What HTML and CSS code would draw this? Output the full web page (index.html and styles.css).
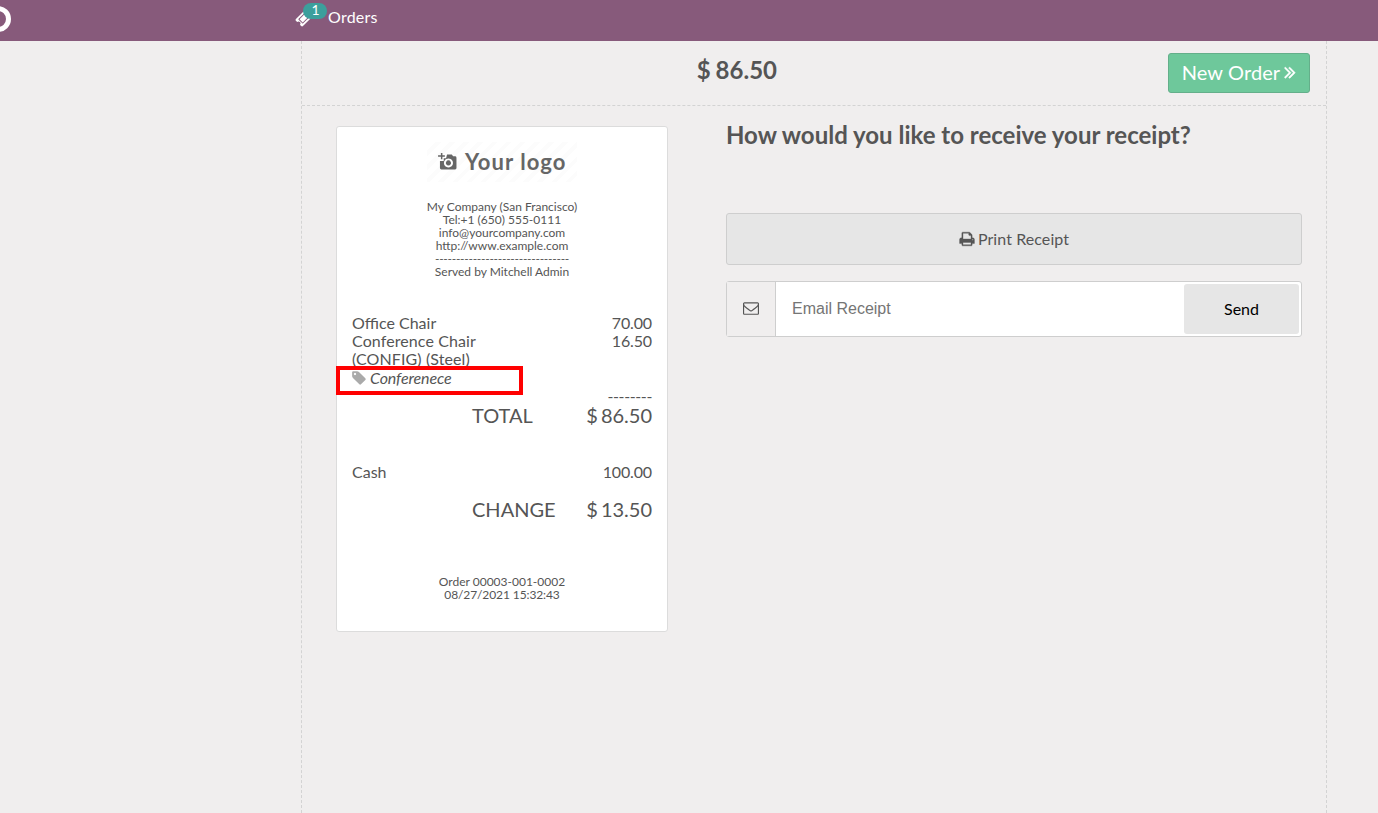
FILE: index.html
```html
<!DOCTYPE html>
<html lang="en">
<head>
<meta charset="utf-8">
<title>Receipt</title>
<link rel="stylesheet" href="styles.css">
</head>
<body>
<div class="pos">
  <header class="topbar">
    <div class="brand"><svg class="brand-mark" viewBox="0 0 12 28"><circle cx="-2" cy="14" r="10.5" fill="none" stroke="#fff" stroke-width="5"/></svg></div>
    <div class="orders">
      <span class="ticket">
        <svg class="ticket-icon" viewBox="0 0 1792 1792"><path d="M1024 452l316 316-572 572-316-316zm-211 979l618-618q19-19 19-45t-19-45l-362-362q-18-18-45-18t-45 18l-618 618q-19 19-19 45t19 45l362 362q18 18 45 18t45-18zm889-637l-907 908q-37 37-90.500 37t-90.500-37l-126-126q56-56 56-136t-56-136-136-56-136 56l-125-126q-37-37-37-90.500t37-90.500l907-906q37-37 90.500-37t90.500 37l125 125q-56 56-56 136t56 136 136 56 136-56l126 125q37 37 37 90.500t-37 90.500z"/></svg>
        <span class="badge">1</span>
      </span>
      <span class="orders-label">Orders</span>
    </div>
  </header>
  <main class="screen">
    <div class="screen-head">
      <h1 class="amount">$ 86.50</h1>
      <button class="next"><span>New Order</span><svg class="next-icon" viewBox="0 0 1024 1792"><path d="M595 960q0 13-10 23l-466 466q-10 10-23 10t-23-10l-50-50q-10-10-10-23t10-23l393-393-393-393q-10-10-10-23t10-23l50-50q10-10 23-10t23 10l466 466q10 10 10 23zm384 0q0 13-10 23l-466 466q-10 10-23 10t-23-10l-50-50q-10-10-10-23t10-23l393-393-393-393q-10-10-10-23t10-23l50-50q10-10 23-10t23 10l466 466q10 10 10 23z"/></svg></button>
    </div>
    <div class="content">
      <section class="receipt">
        <div class="logo">
          <svg class="camera" viewBox="0 0 20 18"><path fill-rule="evenodd" d="M3 0h1.600v2.500h2.600v1.600h-2.600v2.600h-1.600v-2.600h-3v-1.600h3zM9.500 1.500h5l1.500 2h2q1.500 0 1.500 1.500v11q0 1.500-1.500 1.500h-14.500q-1.500 0-1.500-1.500v-7.500h4v-3h2.500zM11 5.700a4.800 4.800 0 1 0 .01 0zM11 7.800a2.700 2.700 0 1 1-.01 0z"/></svg>
          <span class="logo-text">Your logo</span>
        </div>
        <div class="contact">
          <div>My Company (San Francisco)</div>
          <div>Tel:+1 (650) 555-0111</div>
          <div>info@yourcompany.com</div>
          <div>http://www.example.com</div>
          <div class="dashes">--------------------------------</div>
          <div>Served by Mitchell Admin</div>
        </div>
        <div class="lines">
          <div class="row"><span>Office Chair</span><span class="price">70.00</span></div>
          <div class="row"><span class="product">Conference Chair (CONFIG) (Steel)</span><span class="price">16.50</span></div>
          <div class="note">
            <svg class="tag-icon" viewBox="0 0 1792 1792"><path d="M576 448q0-53-37.500-90.500t-90.500-37.500-90.500 37.500-37.500 90.500 37.500 90.500 90.500 37.500 90.500-37.500 37.500-90.500zm1067 576q0 53-37 90l-491 492q-39 37-91 37-53 0-90-37l-715-716q-38-37-64.500-101t-26.500-117v-416q0-52 38-90t90-38h416q53 0 117 26.500t102 64.500l715 714q37 39 37 91z"/></svg>
            <em>Conferenece</em>
            <span class="highlight"></span>
          </div>
        </div>
        <div class="rule">--------</div>
        <div class="row big"><span>TOTAL</span><span>$ 86.50</span></div>
        <div class="row payment"><span>Cash</span><span class="price">100.00</span></div>
        <div class="row big"><span>CHANGE</span><span>$ 13.50</span></div>
        <div class="order-data">
          <div>Order 00003-001-0002</div>
          <div class="date">08/27/2021 15:32:43</div>
        </div>
      </section>
      <section class="actions">
        <h2 class="question">How would you like to receive your receipt?</h2>
        <button class="print"><svg class="print-icon" viewBox="0 0 1792 1792"><path d="M448 1536h896v-256h-896v256zm0-640h896v-384h-160q-40 0-68-28t-28-68v-160h-640v640zm1152 64q0-26-19-45t-45-19-45 19-19 45 19 45 45 19 45-19 19-45zm128 0v416q0 13-9.500 22.500t-22.500 9.500h-224v160q0 40-28 68t-68 28h-960q-40 0-68-28t-28-68v-160h-224q-13 0-22.500-9.500t-9.500-22.500v-416q0-79 56.500-135.500t135.500-56.500h64v-544q0-40 28-68t68-28h672q40 0 88 20t76 48l152 152q28 28 48 76t20 88v256h64q79 0 135.500 56.500t56.500 135.500z"/></svg><span>Print Receipt</span></button>
        <form class="email">
          <span class="email-icon"><svg viewBox="0 0 1792 1792"><path d="M1664 1504v-768q-32 36-69 66-268 206-426 338-51 43-83 67t-86.500 48.500-102.500 24.500h-2q-48 0-102.500-24.500t-86.500-48.500-83-67q-158-132-426-338-37-30-69-66v768q0 13 9.500 22.500t22.500 9.500h1472q13 0 22.500-9.500t9.500-22.500zm0-1051v-24.500l-.5-13-3-12.500-5.500-9-9-7.500-14-2.500h-1472q-13 0-22.500 9.500t-9.500 22.500q0 168 147 284 193 152 401 317 6 5 35 29.500t46 37.500 44.500 31.500 50.500 27.500 43 9h2q20 0 43-9t50.500-27.500 44.500-31.500 46-37.500 35-29.500q208-165 401-317 54-43 100.500-115.500t46.500-131.500zm128-37v1088q0 66-47 113t-113 47h-1472q-66 0-113-47t-47-113v-1088q0-66 47-113t113-47h1472q66 0 113 47t47 113z"/></svg></span>
          <input class="email-input" type="email" placeholder="Email Receipt">
          <button class="send" type="button">Send</button>
        </form>
      </section>
    </div>
  </main>
</div>
</body>
</html>
```
FILE: styles.css
```css
* { box-sizing: border-box; }
body {
  margin: 0;
  background: #f0eeee;
  color: #555;
  font: 16px/18px Lato, "Liberation Sans", sans-serif;
}
svg { display: block; fill: currentColor; flex: none; }
h1, h2 { margin: 0; }
button { font: inherit; color: inherit; }

.pos { display: flex; flex-direction: column; height: 813px; overflow: hidden; }

.topbar { display: flex; height: 41px; flex: none; background: #875a7b; color: #fff; }
.brand { width: 296px; padding-top: 5px; }
.brand-mark { width: 12px; height: 28px; }
.orders { display: flex; padding-top: 8px; }
.ticket { position: relative; width: 32px; }
.ticket-icon { width: 18px; height: 18px; margin: 1px 0 0 -1px; }
.badge {
  position: absolute;
  left: 7px;
  top: -5px;
  width: 24px;
  height: 16px;
  padding-left: 1px;
  border-radius: 8px;
  background: #3c9f9c;
  font-size: 14px;
  line-height: 14px;
  text-align: center;
}
.orders-label { line-height: 17px; letter-spacing: 0.25px; }

.screen {
  flex: 1;
  width: 1026px;
  margin-left: 301px;
  border: 1px dashed #d3d3d3;
  border-width: 0 1px;
}
.screen-head {
  display: flex;
  justify-content: flex-end;
  align-items: flex-start;
  gap: 391px;
  height: 65px;
  padding: 12px 16px 0 0;
  border-bottom: 1px dashed #d3d3d3;
}
.amount {
  font-size: 24px;
  line-height: 34px;
  font-weight: 700;
  white-space: nowrap;
  word-spacing: -1px;
}
.next {
  display: flex;
  align-items: center;
  justify-content: center;
  gap: 4px;
  width: 142px;
  height: 40px;
  padding: 0 0 2px;
  border: 1px solid #64af8a;
  border-radius: 3px;
  background: #6ec89b;
  color: #fff;
  font-size: 20px;
  letter-spacing: 0.1px;
  white-space: nowrap;
}
.next-icon { width: 12px; height: 20px; stroke: currentColor; stroke-width: 40px; }

.content { display: flex; gap: 58px; padding: 20px 24px 0 34px; align-items: flex-start; }
.receipt {
  width: 332px;
  height: 506px;
  padding: 15px;
  border: 1px solid #dcdcdc;
  border-radius: 3px;
  background: #fff;
}
.logo {
  display: flex;
  align-items: center;
  gap: 8px;
  width: 150px;
  height: 40px;
  margin: 0 auto 18px;
  padding: 0 0 1px 11px;
  background: repeating-linear-gradient(135deg, #fff 0 6px, #fcfcfc 6px 10px);
  color: #666;
}
.camera { width: 19px; height: 17px; }
.logo-text { font: 700 22px/30px Lato, sans-serif; letter-spacing: 1.05px; white-space: nowrap; }
.contact, .order-data { font-size: 12px; line-height: 13px; text-align: center; }
.dashes { letter-spacing: -0.27px; }
.lines { margin-top: 36px; }
.row { display: flex; justify-content: space-between; }
.product { width: 150px; letter-spacing: 0.1px; }
.price { letter-spacing: -0.15px; }
.note { position: relative; display: flex; gap: 3px; margin-top: 1px; }
.note em { letter-spacing: -0.1px; }
.tag-icon { width: 16px; height: 16px; margin: 1px 0 0 -1px; color: #aaa; }
.highlight {
  position: absolute;
  left: -16px;
  top: -3px;
  width: 187px;
  height: 29px;
  border: 4px solid #f00;
}
.rule { text-align: right; letter-spacing: -0.38px; }
.big { padding-left: 120px; font-size: 20px; line-height: 20px; word-spacing: -2px; }
.payment { margin: 38px 0 18px; }
.order-data { margin-top: 56px; }
.date { letter-spacing: -0.1px; }

.actions { width: 576px; }
.question { font-size: 24px; line-height: 18px; font-weight: 700; white-space: nowrap; }
.print {
  display: flex;
  align-items: center;
  justify-content: center;
  gap: 3px;
  width: 100%;
  height: 52px;
  margin-top: 69px;
  border: 1px solid #cecece;
  border-radius: 3px;
  background: #e6e6e6;
  letter-spacing: 0.08px;
}
.print-icon { width: 16px; height: 16px; stroke: currentColor; stroke-width: 40px; }
.email {
  display: flex;
  height: 56px;
  margin-top: 16px;
  padding: 0;
  border: 1px solid #cecece;
  border-radius: 3px;
  background: #fff;
}
.email-icon {
  display: grid;
  place-items: center;
  width: 49px;
  padding-bottom: 2px;
  border-right: 1px solid #cecece;
  background: #f0eeee;
}
.email-icon svg { width: 16px; height: 16px; }
.email-input {
  flex: 1;
  min-width: 0;
  padding: 0 16px;
  border: 0;
  background: #fff;
  font: 16px "Liberation Sans", Arial, sans-serif;
}
.email-input::placeholder { color: #757575; }
.send {
  width: 115px;
  margin: 2px;
  border: 0;
  border-radius: 3px;
  background: #e6e6e6;
  color: #000;
}
```
